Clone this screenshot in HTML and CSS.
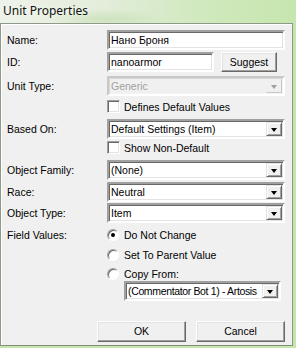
FILE: index.html
```html
<!DOCTYPE html>
<html>
<head>
<meta charset="utf-8">
<link rel="stylesheet" href="styles.css">
</head>
<body>
<div class="window">
  <div class="titlebar"><span class="title">Unit Properties</span></div>
  <div class="panel">
    <div class="row mt-name">
      <span class="lbl">Name:</span>
      <div class="edit full">Нано Броня</div>
    </div>
    <div class="row mt-id">
      <span class="lbl">ID:</span>
      <div class="idline">
        <div class="edit idbox">nanoarmor</div>
        <div class="btn suggest">Suggest</div>
      </div>
    </div>
    <div class="row mt-unit">
      <span class="lbl">Unit Type:</span>
      <div class="combo full disabled"><span class="val">Generic</span><span class="drop"><i class="arrow"></i></span></div>
    </div>
    <div class="row check mt-def">
      <span class="lbl"></span>
      <div class="opt"><span class="box"></span><span class="opttext">Defines Default Values</span></div>
    </div>
    <div class="row mt-based">
      <span class="lbl">Based On:</span>
      <div class="combo full"><span class="val">Default Settings (Item)</span><span class="drop"><i class="arrow"></i></span></div>
    </div>
    <div class="row check mt-show">
      <span class="lbl"></span>
      <div class="opt"><span class="box"></span><span class="opttext">Show Non-Default</span></div>
    </div>
    <div class="row mt-fam">
      <span class="lbl">Object Family:</span>
      <div class="combo full"><span class="val">(None)</span><span class="drop"><i class="arrow"></i></span></div>
    </div>
    <div class="row mt-race">
      <span class="lbl">Race:</span>
      <div class="combo full"><span class="val">Neutral</span><span class="drop"><i class="arrow"></i></span></div>
    </div>
    <div class="row mt-type">
      <span class="lbl">Object Type:</span>
      <div class="combo full"><span class="val">Item</span><span class="drop"><i class="arrow"></i></span></div>
    </div>
    <div class="row check mt-r1">
      <span class="lbl">Field Values:</span>
      <div class="opt"><span class="radio on"></span><span class="opttext rt">Do Not Change</span></div>
    </div>
    <div class="row check mt-r2">
      <span class="lbl"></span>
      <div class="opt"><span class="radio"></span><span class="opttext rt">Set To Parent Value</span></div>
    </div>
    <div class="row check mt-r3">
      <span class="lbl"></span>
      <div class="opt"><span class="radio"></span><span class="opttext rt">Copy From:</span></div>
    </div>
    <div class="copyline">
      <div class="combo copy"><span class="val tight">(Commentator Bot 1) - Artosis</span><span class="drop"><i class="arrow"></i></span></div>
    </div>
    <div class="buttons">
      <div class="btn big">OK</div>
      <div class="btn big">Cancel</div>
    </div>
  </div>
</div>
</body>
</html>
```

FILE: styles.css
```css
html, body {
  margin: 0;
  padding: 0;
}
body {
  width: 296px;
  height: 348px;
  overflow: hidden;
  background: #c4e6ac;
  font-family: "Liberation Sans", Arial, sans-serif;
  font-size: 10.5px;
  color: #000;
}
.window {
  width: 296px;
}
.titlebar {
  height: 23px;
  box-sizing: border-box;
  padding-left: 3px;
  padding-top: 3px;
  background:
    radial-gradient(ellipse 60px 10px at 105px 19px, rgba(190, 220, 170, 0.6), rgba(190, 220, 170, 0) 100%),
    linear-gradient(to right, #eef3e9 0%, #e3eddb 35%, #d2e9c0 65%, #c6e6ae 100%);
}
.title {
  font-family: "Noto Sans", "Open Sans", sans-serif;
  font-size: 12px;
  line-height: 16px;
  color: #111;
  text-shadow: 0 0 4px rgba(255, 255, 255, 0.9);
}
.panel {
  width: 293px;
  box-sizing: border-box;
  background: #f0f0f0;
  border: 1px solid #8e9a88;
  border-bottom-color: #7f8f78;
  box-shadow: inset 1px 1px #ffffff;
  padding: 6px 7px 3px 6px;
}
.row {
  display: grid;
  grid-template-columns: 100px 178px;
  align-items: center;
  height: 20px;
}
.row.check {
  height: 13px;
}
.lbl {
  white-space: nowrap;
}
.mt-name { margin-top: 0; }
.mt-id { margin-top: 2px; }
.mt-unit { margin-top: 4px; }
.mt-def { margin-top: 4px; }
.mt-based { margin-top: 6px; }
.mt-show { margin-top: 2px; }
.mt-fam { margin-top: 6px; }
.mt-race { margin-top: 2px; }
.mt-type { margin-top: 1px; }
.mt-r1 { margin-top: 5px; }
.mt-r2 { margin-top: 7px; }
.mt-r3 { margin-top: 6px; }

.edit, .combo {
  box-sizing: border-box;
  height: 20px;
  background: #fff;
  border: 2px solid;
  border-color: #a0a0a0 #ffffff #ffffff #a0a0a0;
  box-shadow: inset 1px 1px #696969, inset -1px -1px #e3e3e3;
  padding: 0 0 0 2px;
  line-height: 16px;
  white-space: nowrap;
  overflow: hidden;
}
.full {
  width: 178px;
}
.idline {
  display: flex;
  align-items: center;
  gap: 7px;
}
.idbox {
  width: 107px;
}
.btn {
  box-sizing: border-box;
  background: #f0f0f0;
  border: 1px solid;
  border-color: #ffffff #696969 #696969 #ffffff;
  box-shadow: inset -1px -1px #a0a0a0, inset 1px 1px #e3e3e3;
  text-align: center;
  line-height: 18px;
}
.suggest {
  width: 56px;
  height: 20px;
}
.combo {
  display: flex;
  align-items: stretch;
  padding: 1px 1px 1px 2px;
}
.combo .val {
  flex: 1;
  line-height: 14px;
  overflow: hidden;
}
.combo .val.tight {
  letter-spacing: -0.35px;
}
.drop {
  width: 16px;
  flex: none;
  box-sizing: border-box;
  background: #f0f0f0;
  border: 1px solid;
  border-color: #e3e3e3 #696969 #696969 #e3e3e3;
  box-shadow: inset 1px 1px #ffffff, inset -1px -1px #a0a0a0;
  display: flex;
  align-items: center;
  justify-content: center;
}
.arrow {
  display: block;
  width: 0;
  height: 0;
  border-left: 3.5px solid transparent;
  border-right: 3.5px solid transparent;
  border-top: 4px solid #000;
  margin-top: 1px;
}
.combo.disabled {
  background: #f0f0f0;
  color: #a0a0a0;
  border-color: #c8c8c8 #ffffff #ffffff #c8c8c8;
  box-shadow: inset 1px 1px #d8d8d8, inset -1px -1px #f4f4f4;
}
.combo.disabled .arrow {
  border-top-color: #a0a0a0;
}
.combo.disabled .drop {
  border-color: #f0f0f0 #c8c8c8 #c8c8c8 #f0f0f0;
  box-shadow: none;
}
.opt {
  display: flex;
  align-items: center;
  height: 13px;
  white-space: nowrap;
}
.box {
  width: 13px;
  height: 13px;
  box-sizing: border-box;
  background: #fff;
  border: 1px solid;
  border-color: #a0a0a0 #ffffff #ffffff #a0a0a0;
  box-shadow: inset 1px 1px #696969, inset -1px -1px #e3e3e3;
  flex: none;
}
.opttext {
  margin-left: 4px;
}
.opttext.rt {
  margin-left: 5px;
}
.radio {
  width: 12px;
  height: 12px;
  box-sizing: border-box;
  border-radius: 50%;
  background: #fff;
  border: 1px solid;
  border-color: #a0a0a0 #ffffff #ffffff #a0a0a0;
  box-shadow: inset 1px 1px #696969;
  position: relative;
  flex: none;
}
.radio.on::after {
  content: "";
  position: absolute;
  left: 3px;
  top: 3px;
  width: 4px;
  height: 4px;
  border-radius: 50%;
  background: #000;
}
.copyline {
  margin-top: 1px;
  padding-left: 117px;
}
.copy {
  width: 157px;
}
.buttons {
  margin-top: 20px;
  display: flex;
  justify-content: flex-end;
  gap: 10px;
}
.big {
  width: 89px;
  height: 21px;
  line-height: 19px;
}
```
